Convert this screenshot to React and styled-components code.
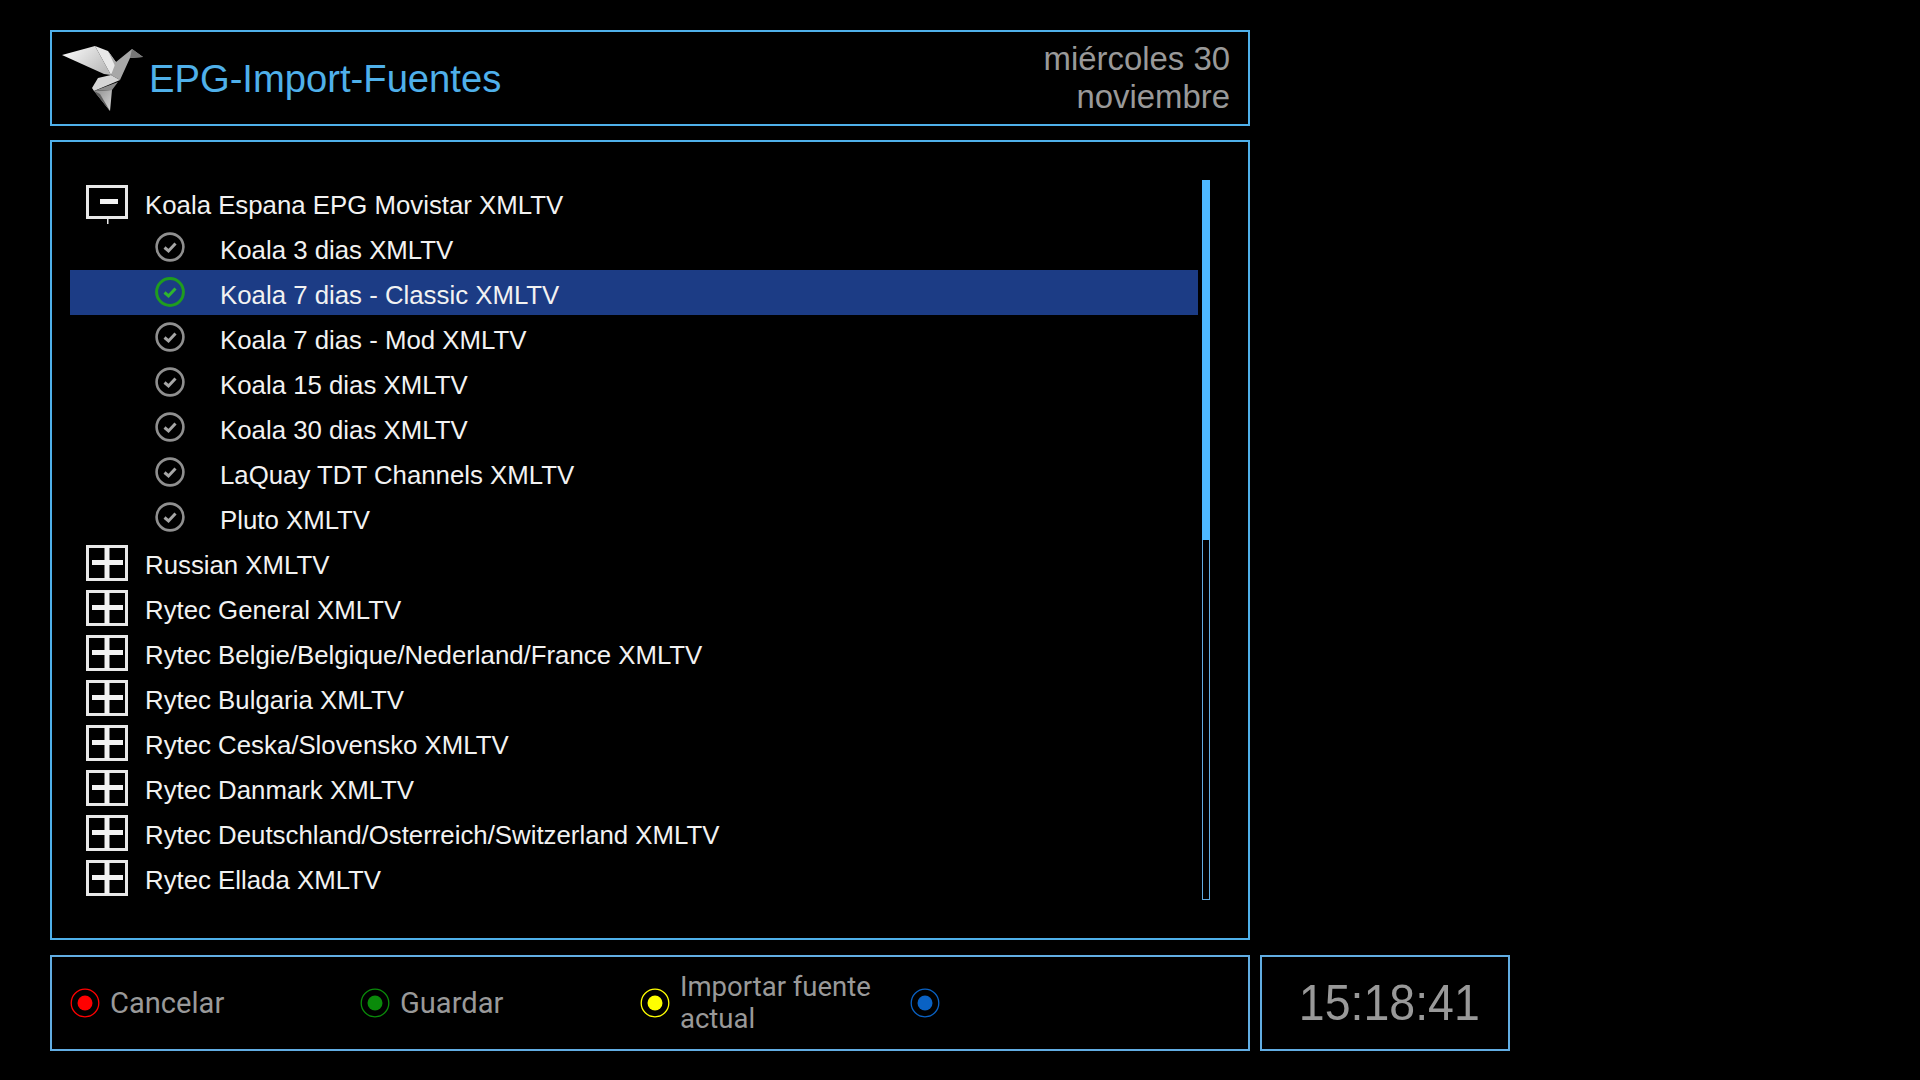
import React from "react";
import styled, { createGlobalStyle } from "styled-components";

const GlobalStyle = createGlobalStyle`
  html, body {
    margin: 0;
    background: #000;
  }
`;

const BLUE = "#4fb0ea";
const PALE_BLUE = "#62ade2";

const Screen = styled.div`
  width: 1920px;
  height: 1080px;
  padding: 30px 0 0 50px;
  box-sizing: border-box;
  background: #000;
  display: flex;
  flex-direction: column;
  gap: 14px;
  font-family: "Liberation Sans", Arial, sans-serif;
`;

const Panel = styled.div`
  width: 1200px;
  box-sizing: border-box;
  border: 2px solid ${BLUE};
`;

const Header = styled(Panel)`
  height: 96px;
  display: flex;
  align-items: center;
  padding: 0 18px 0 10px;
`;

const LogoMark = styled.svg`
  flex: none;
  margin-top: 5px;
`;

const Title = styled.h1`
  margin: 0 0 0 1px;
  padding-top: 1px;
  flex: 1;
  font-size: 38.2px;
  font-weight: 400;
  color: ${BLUE};
`;

const DateText = styled.div`
  width: 260px;
  text-align: right;
  font-size: 32.9px;
  line-height: 38px;
  color: #999;
`;

const ListPanel = styled(Panel)`
  height: 800px;
  padding: 38px 10px 0 18px;
  display: flex;
  gap: 4px;
  align-items: flex-start;
`;

const List = styled.div`
  flex: 1;
`;

const Row = styled.div`
  height: 45px;
  display: flex;
  align-items: center;
  font-size: 25.8px;
  color: #f2f2f2;
  background: ${props => (props.$selected ? "#1c3c85" : "transparent")};
`;

const RowLabel = styled.span`
  padding-top: 5px;
`;

const ExpanderSlot = styled.div`
  width: 75px;
  padding-left: 16px;
  box-sizing: border-box;
  display: flex;
`;

const CheckSlot = styled.div`
  width: 150px;
  padding: 0 0 2px 85px;
  box-sizing: border-box;
  display: flex;
`;

const Track = styled.div`
  width: 8px;
  height: 720px;
  margin-right: 28px;
  box-sizing: border-box;
  border: 1px solid ${PALE_BLUE};
`;

const Thumb = styled.div`
  width: 8px;
  height: 360px;
  margin-left: -1px;
  margin-top: -1px;
  background: #4db8ff;
`;

const Bottom = styled.div`
  display: flex;
  gap: 10px;
  margin-top: 1px;
`;

const Footer = styled(Panel)`
  height: 96px;
  display: flex;
  align-items: center;
  padding-left: 18px;
  border-color: ${PALE_BLUE};
`;

const KeyHint = styled.div`
  width: ${props => props.$width}px;
  display: flex;
  align-items: center;
  gap: 10px;
  font-family: Roboto, sans-serif;
  font-size: ${props => props.$size || 29.1}px;
  line-height: 32px;
  color: #999;
`;

const Clock = styled(Panel)`
  width: 250px;
  height: 96px;
  display: flex;
  align-items: center;
  justify-content: center;
  padding-left: 8px;
  border-color: ${PALE_BLUE};
`;

const ClockText = styled.span`
  font-size: 50px;
  color: #999;
  transform: scaleX(0.93);
`;

const Logo = () => (
  <LogoMark width="86" height="70" viewBox="0 0 86 70">
    <defs>
      <linearGradient id="wing" x1="0" y1="0" x2="1" y2="0.6">
        <stop offset="0" stopColor="#ffffff" />
        <stop offset="1" stopColor="#bdbdbd" />
      </linearGradient>
      <linearGradient id="tail" x1="0" y1="0" x2="1" y2="1">
        <stop offset="0" stopColor="#8e8e8e" />
        <stop offset="1" stopColor="#d8d8d8" />
      </linearGradient>
    </defs>
    <polygon points="0,9 33,0 49,29 42,28" fill="url(#wing)" />
    <polygon points="33,0 46,5 56,19 49,29" fill="#e8e8e8" />
    <polygon points="46,5 54,22 49,29 56,19" fill="#aaa" />
    <polygon points="54,16 70,3 81,11 68,12 58,34 49,29" fill="#a8a8a8" />
    <polygon points="70,3 81,11 68,12" fill="#777" />
    <polygon points="49,29 58,34 32,45 30,42 36,32" fill="#d6d6d6" />
    <polygon points="56,36 50,44 32,45" fill="#8c8c8c" />
    <polygon points="32,45 50,44 48,65" fill="url(#tail)" />
    <polygon points="32,45 38,48 48,65" fill="#5e5e5e" />
  </LogoMark>
);

const Check = ({ on }) => (
  <svg width="30" height="30" viewBox="0 0 30 30">
    <circle cx="15" cy="15" r="13.4" fill="none" stroke={on ? "#1f9c1f" : "#8f8f8f"} strokeWidth={on ? 3 : 2.6} />
    <path d="M9.5 15.5 L13.5 19 L20.5 11.5" fill="none" stroke={on ? "#2fb52f" : "#a6a6a6"} strokeWidth="3" />
  </svg>
);

const Expander = ({ open }) => (
  <svg width="44" height="45" viewBox="0 0 44 45">
    <rect x="1.5" y="6.5" width="39" height={open ? 31 : 33} fill="none" stroke="#e8e8e8" strokeWidth="3" />
    {open ? (
      <>
        <rect x="14" y="19" width="18" height="5" fill="#f2f2f2" />
        <rect x="21" y="39" width="1.5" height="5" fill="#e8e8e8" />
      </>
    ) : (
      <>
        <rect x="6" y="20" width="31" height="5" fill="#f2f2f2" />
        <rect x="18.5" y="6" width="5" height="33" fill="#f2f2f2" />
      </>
    )}
  </svg>
);

const KeyDot = ({ color }) => (
  <svg width="30" height="30" viewBox="0 0 30 30" style={{ flex: "none" }}>
    <circle cx="15" cy="15" r="13.8" fill="none" stroke={color} strokeWidth="1.3" />
    <circle cx="15" cy="15" r="7.5" fill={color} />
  </svg>
);

const rows = [
  { label: "Koala Espana EPG Movistar XMLTV", group: true, open: true },
  { label: "Koala 3 dias XMLTV" },
  { label: "Koala 7 dias - Classic XMLTV", selected: true },
  { label: "Koala 7 dias - Mod XMLTV" },
  { label: "Koala 15 dias XMLTV" },
  { label: "Koala 30 dias XMLTV" },
  { label: "LaQuay TDT Channels XMLTV" },
  { label: "Pluto XMLTV" },
  { label: "Russian XMLTV", group: true },
  { label: "Rytec General XMLTV", group: true },
  { label: "Rytec Belgie/Belgique/Nederland/France XMLTV", group: true },
  { label: "Rytec Bulgaria XMLTV", group: true },
  { label: "Rytec Ceska/Slovensko XMLTV", group: true },
  { label: "Rytec Danmark XMLTV", group: true },
  { label: "Rytec Deutschland/Osterreich/Switzerland XMLTV", group: true },
  { label: "Rytec Ellada XMLTV", group: true },
];

const App = () => (
  <Screen>
    <GlobalStyle />
    <Header>
      <Logo />
      <Title>EPG-Import-Fuentes</Title>
      <DateText>miércoles 30 noviembre</DateText>
    </Header>
    <ListPanel>
      <List>
        {rows.map(row => (
          <Row key={row.label} $selected={row.selected}>
            {row.group ? (
              <ExpanderSlot><Expander open={row.open} /></ExpanderSlot>
            ) : (
              <CheckSlot><Check on={row.selected} /></CheckSlot>
            )}
            <RowLabel>{row.label}</RowLabel>
          </Row>
        ))}
      </List>
      <Track><Thumb /></Track>
    </ListPanel>
    <Bottom>
      <Footer>
        <KeyHint $width={290}><KeyDot color="#ff0000" />Cancelar</KeyHint>
        <KeyHint $width={280}><KeyDot color="#0a8a0a" />Guardar</KeyHint>
        <KeyHint $width={270} $size={27.5}><KeyDot color="#ffff00" />Importar fuente actual</KeyHint>
        <KeyHint $width={60}><KeyDot color="#0a62c4" /></KeyHint>
      </Footer>
      <Clock><ClockText>15:18:41</ClockText></Clock>
    </Bottom>
  </Screen>
);

export default App;
